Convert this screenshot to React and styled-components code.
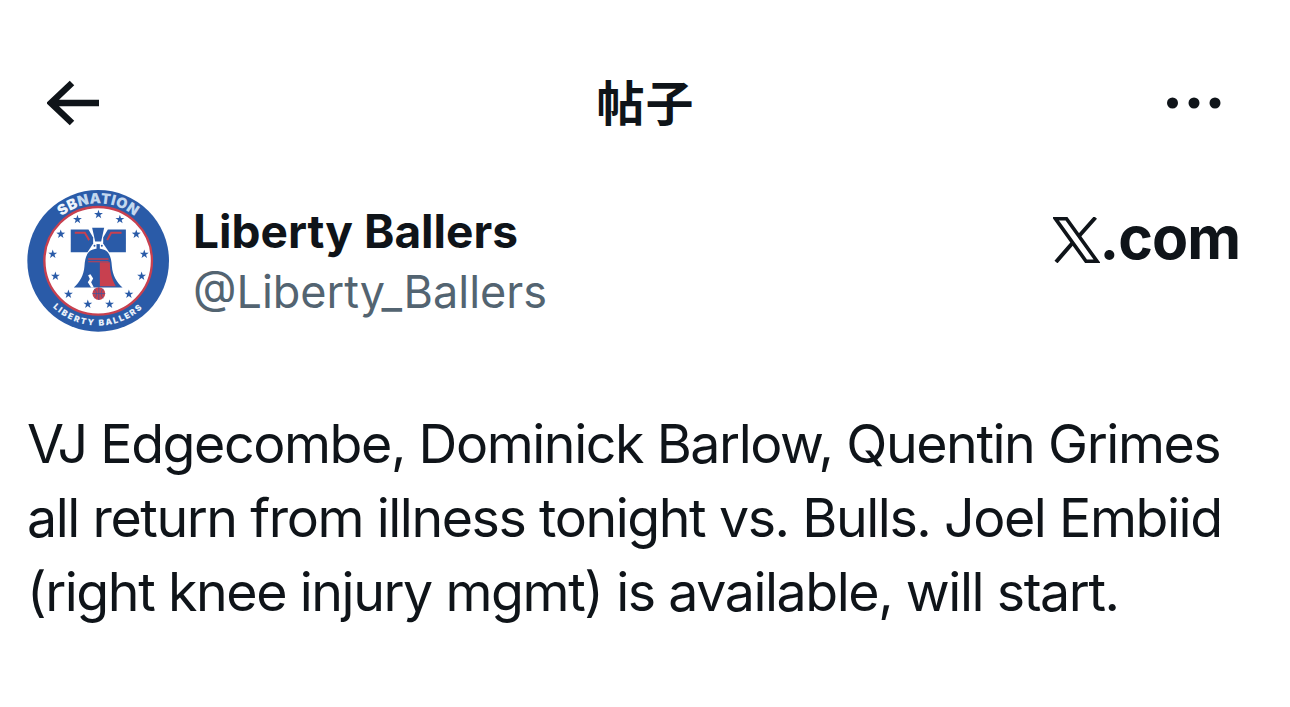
import styled, { createGlobalStyle } from "styled-components";

const GlobalStyle = createGlobalStyle`
    html, body {
        margin: 0;
        padding: 0;
        background: #fff;
    }
`;

const Page = styled.div`
    width: 1290px;
    height: 707px;
    overflow: hidden;
    background: #fff;
    color: #0f1419;
    font-family: Inter, "Noto Sans CJK SC", sans-serif;
    padding-top: 68px;
    box-sizing: border-box;
`;

const TopBar = styled.div`
    height: 70px;
    padding-inline: 47px 68px;
    display: grid;
    grid-template-columns: 1fr auto 1fr;
    align-items: center;
`;

const Title = styled.div`
    font-family: "Noto Sans CJK SC", sans-serif;
    font-size: 48px;
    line-height: 60px;
    font-weight: 700;
    letter-spacing: 1px;
    margin-bottom: 7px;
    transform: translateX(11px);
`;

const MoreIcon = styled.svg`
    justify-self: end;
`;

const Header = styled.div`
    margin-top: 52px;
    padding-inline: 27px 50px;
    display: flex;
    align-items: center;
    gap: 24px;
`;

const Names = styled.div`
    flex: 1;
    display: flex;
    flex-direction: column;
    gap: 9px;
`;

const Name = styled.div`
    font-size: 46px;
    line-height: 52px;
    font-weight: 700;
`;

const Handle = styled.div`
    font-size: 45px;
    line-height: 52px;
    color: #536471;
`;

const Brand = styled.div`
    display: flex;
    align-items: flex-end;
    margin-top: -46px;
    font-size: 59px;
    line-height: 60px;
    font-weight: 700;
    letter-spacing: -1px;
`;

const Body = styled.div`
    margin-top: 75px;
    padding-inline: 27px;
    font-size: 53.7px;
    line-height: 74px;
    letter-spacing: -1.43px;
    white-space: nowrap;
`;

const BLUE = "#2a5ba8";
const RED = "#c8404f";

const Stars = [
    [173, 118], [236, 103], [300, 118], [349, 162], [373, 222], [365, 288], [327, 342],
    [269, 372], [204, 372], [146, 342], [107, 288], [99, 222], [123, 162],
];

function Star({ x, y }) {
    const pts = [];
    for (let i = 0; i < 10; i++) {
        const r = i % 2 === 0 ? 14 : 5.5;
        const a = (Math.PI / 5) * i - Math.PI / 2;
        pts.push(`${x + r * Math.cos(a)},${y + r * Math.sin(a)}`);
    }
    return <polygon points={pts.join(" ")} fill={BLUE} />;
}

// viewBox is in the coordinates of the 3x crop of the badge
function Logo() {
    return (
        <svg width="142" height="142" viewBox="22 30 425 425" style={{ flexShrink: 0 }}>
            <defs>
                <path id="arcTop" d="M 63 242 A 172 172 0 0 1 407 242" />
                <path id="arcBottom" d="M 41 242 A 194 194 0 0 0 429 242" />
            </defs>
            <circle cx="235" cy="242" r="212" fill={BLUE} />
            <circle cx="235" cy="242" r="161" fill="#fff" stroke={RED} strokeWidth="7" />
            <text fontFamily="Inter, sans-serif" fontWeight="900" fontSize="43" letterSpacing="1" fill="#c3d8ef">
                <textPath href="#arcTop" startOffset="50%" textAnchor="middle">
                    <tspan fill="#eef4fb">SB</tspan>NATION
                </textPath>
            </text>
            <text fontFamily="Inter, sans-serif" fontWeight="900" fontSize="25" letterSpacing="5" fill="#e8f0fa">
                <textPath href="#arcBottom" startOffset="50%" textAnchor="middle">LIBERTY BALLERS</textPath>
            </text>
            {Stars.map(([x, y]) => <Star key={`${x}-${y}`} x={x} y={y} />)}
            <path d="M153 148H206L220 172V190L203 216H153Z" fill={BLUE} />
            <path d="M318 148H264L250 172V190L268 216H318Z" fill={BLUE} />
            <path d="M217 143H253L244 184H226Z" fill={BLUE} />
            <path d="M165 158H195L208 180" fill="none" stroke={RED} strokeWidth="6" />
            <path d="M305 158H274L262 180" fill="none" stroke={RED} strokeWidth="6" />
            <circle cx="224" cy="197" r="3" fill={BLUE} />
            <circle cx="246" cy="197" r="3" fill={BLUE} />
            <path d="M230 192H240V210H230Z" fill={BLUE} />
            <path d="M235 206C205 206 196 225 194 258C192 285 180 305 162 322H308C290 305 278 285 276 258C274 225 265 206 235 206Z" fill={BLUE} />
            <path d="M205 234H266V239H205ZM205 243H266V246H205Z" fill={RED} />
            <path d="M240 246H270C270 275 276 298 288 318H240Z" fill={RED} />
            <path d="M205 285L210 296L204 306L214 322H222L214 306L220 295L212 282Z" fill="#fff" />
            <circle cx="237" cy="340" r="19" fill={RED} />
            <path d="M218 340H256M237 321V359M224 326C232 334 232 348 224 354M250 326C242 334 242 348 250 354" fill="none" stroke={BLUE} strokeWidth="2" />
        </svg>
    );
}

function XMark() {
    return (
        <svg width="47" height="46" viewBox="0 0 47 46" style={{ marginBottom: 5 }}>
            <path d="M2.5 1.8H13.5L44 44.2H33Z" fill="none" stroke="#0f1419" strokeWidth="3.6" />
            <path d="M42.5 0.5L26.5 18.5M19.5 26L3 45" fill="none" stroke="#0f1419" strokeWidth="4" />
        </svg>
    );
}

export default function App() {
    return (
        <Page>
            <GlobalStyle />
            <TopBar>
                <svg width="54" height="46" viewBox="0 0 54 46">
                    <path d="M25 3L4 23L25 43M4 23H52" fill="none" stroke="#0f1419" strokeWidth="6.5" />
                </svg>
                <Title>帖子</Title>
                <MoreIcon width="56" height="12" viewBox="0 0 56 12">
                    <circle cx="6.5" cy="6" r="5.5" fill="#0f1419" />
                    <circle cx="28" cy="6" r="5.5" fill="#0f1419" />
                    <circle cx="49" cy="6" r="5.5" fill="#0f1419" />
                </MoreIcon>
            </TopBar>
            <Header>
                <Logo />
                <Names>
                    <Name>Liberty Ballers</Name>
                    <Handle>@Liberty_Ballers</Handle>
                </Names>
                <Brand>
                    <XMark />
                    .com
                </Brand>
            </Header>
            <Body>
                VJ Edgecombe, Dominick Barlow, Quentin Grimes<br />
                all return from illness tonight vs. Bulls. Joel Embiid<br />
                (right knee injury mgmt) is available, will start.
            </Body>
        </Page>
    );
}
